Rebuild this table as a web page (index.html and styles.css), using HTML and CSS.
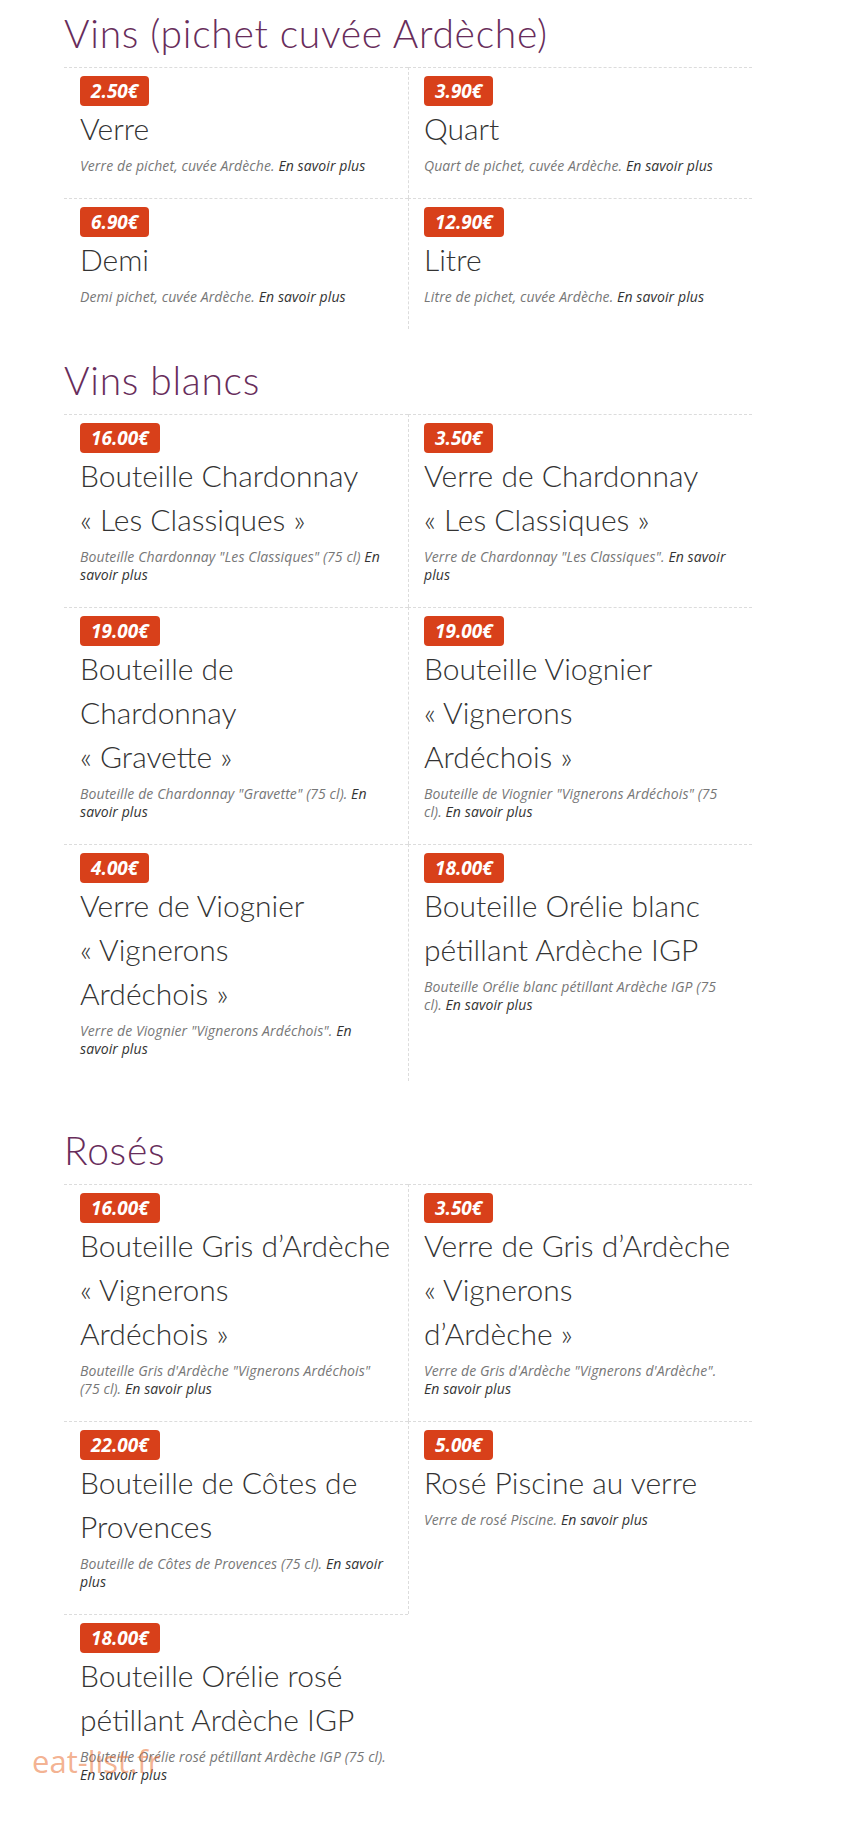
FILE: index.html
```html
<!DOCTYPE html>
<html lang="fr">
<head>
<meta charset="utf-8">
<title>Carte des vins</title>
<link rel="stylesheet" href="styles.css">
</head>
<body>
<main class="menu">
  <section class="category">
    <h2 class="category-title">Vins (pichet cuvée Ardèche)</h2>
    <div class="items">
      <article class="item">
        <span class="price">2.50€</span>
        <h3 class="item-name">Verre</h3>
        <p class="item-desc">Verre de pichet, cuvée Ardèche. <a class="more">En savoir plus</a></p>
      </article>
      <article class="item">
        <span class="price">3.90€</span>
        <h3 class="item-name">Quart</h3>
        <p class="item-desc">Quart de pichet, cuvée Ardèche. <a class="more">En savoir plus</a></p>
      </article>
      <article class="item">
        <span class="price">6.90€</span>
        <h3 class="item-name">Demi</h3>
        <p class="item-desc">Demi pichet, cuvée Ardèche. <a class="more">En savoir plus</a></p>
      </article>
      <article class="item">
        <span class="price">12.90€</span>
        <h3 class="item-name">Litre</h3>
        <p class="item-desc">Litre de pichet, cuvée Ardèche. <a class="more">En savoir plus</a></p>
      </article>
    </div>
  </section>

  <section class="category">
    <h2 class="category-title">Vins blancs</h2>
    <div class="items">
      <article class="item">
        <span class="price">16.00€</span>
        <h3 class="item-name">Bouteille Chardonnay<br>«&nbsp;Les Classiques&nbsp;»</h3>
        <p class="item-desc">Bouteille Chardonnay "Les Classiques" (75 cl) <a class="more">En savoir plus</a></p>
      </article>
      <article class="item">
        <span class="price">3.50€</span>
        <h3 class="item-name">Verre de Chardonnay<br>«&nbsp;Les Classiques&nbsp;»</h3>
        <p class="item-desc">Verre de Chardonnay "Les Classiques". <a class="more">En savoir plus</a></p>
      </article>
      <article class="item">
        <span class="price">19.00€</span>
        <h3 class="item-name">Bouteille de<br>Chardonnay<br>«&nbsp;Gravette&nbsp;»</h3>
        <p class="item-desc">Bouteille de Chardonnay "Gravette" (75 cl). <a class="more">En savoir plus</a></p>
      </article>
      <article class="item">
        <span class="price">19.00€</span>
        <h3 class="item-name">Bouteille Viognier<br>«&nbsp;Vignerons<br>Ardéchois&nbsp;»</h3>
        <p class="item-desc">Bouteille de Viognier "Vignerons Ardéchois" (75 cl). <a class="more">En savoir plus</a></p>
      </article>
      <article class="item">
        <span class="price">4.00€</span>
        <h3 class="item-name">Verre de Viognier<br>«&nbsp;Vignerons<br>Ardéchois&nbsp;»</h3>
        <p class="item-desc">Verre de Viognier "Vignerons Ardéchois". <a class="more">En savoir plus</a></p>
      </article>
      <article class="item">
        <span class="price">18.00€</span>
        <h3 class="item-name">Bouteille Orélie blanc<br>pétillant Ardèche IGP</h3>
        <p class="item-desc">Bouteille Orélie blanc pétillant Ardèche IGP (75 cl). <a class="more">En savoir plus</a></p>
      </article>
    </div>
  </section>

  <section class="category category--spaced">
    <h2 class="category-title">Rosés</h2>
    <div class="items">
      <article class="item">
        <span class="price">16.00€</span>
        <h3 class="item-name">Bouteille Gris d’Ardèche<br>«&nbsp;Vignerons<br>Ardéchois&nbsp;»</h3>
        <p class="item-desc">Bouteille Gris d'Ardèche "Vignerons Ardéchois" (75 cl). <a class="more">En savoir plus</a></p>
      </article>
      <article class="item">
        <span class="price">3.50€</span>
        <h3 class="item-name">Verre de Gris d’Ardèche<br>«&nbsp;Vignerons<br>d’Ardèche&nbsp;»</h3>
        <p class="item-desc">Verre de Gris d'Ardèche "Vignerons d'Ardèche". <a class="more">En savoir plus</a></p>
      </article>
      <article class="item">
        <span class="price">22.00€</span>
        <h3 class="item-name">Bouteille de Côtes de<br>Provences</h3>
        <p class="item-desc">Bouteille de Côtes de Provences (75 cl). <a class="more">En savoir plus</a></p>
      </article>
      <article class="item">
        <span class="price">5.00€</span>
        <h3 class="item-name">Rosé Piscine au verre</h3>
        <p class="item-desc">Verre de rosé Piscine. <a class="more">En savoir plus</a></p>
      </article>
      <article class="item">
        <span class="price">18.00€</span>
        <h3 class="item-name">Bouteille Orélie rosé<br>pétillant Ardèche IGP</h3>
        <p class="item-desc">Bouteille Orélie rosé pétillant Ardèche IGP (75 cl). <a class="more">En savoir plus</a></p>
      </article>
    </div>
  </section>

  <div class="watermark">eat-list.fr</div>
</main>
</body>
</html>
```

FILE: styles.css
```css
html, body {
  margin: 0;
  padding: 0;
  background: #ffffff;
}

.menu {
  position: relative;
  width: 688px;
  padding: 11px 0 0 64px;
}

.category + .category {
  margin-top: 29px;
}

.category--spaced {
  margin-top: 47px !important;
}

.category-title {
  margin: 0 0 12px;
  font-family: "Lato", "Open Sans", sans-serif;
  font-weight: 300;
  font-size: 39px;
  letter-spacing: 0.7px;
  line-height: 44px;
  color: #682d5b;
}

.items {
  display: grid;
  grid-template-columns: repeat(2, minmax(0, 1fr));
}

.item {
  border-top: 1px dashed #dcdcdc;
  padding: 8px 20px 23px 16px;
}

.item:nth-child(even) {
  border-left: 1px dashed #dcdcdc;
  padding-left: 15px;
}

.price {
  display: block;
  width: fit-content;
  padding: 0 11px;
  height: 30px;
  border-radius: 4px;
  background: #d8401a;
  color: #ffffff;
  font-family: "Open Sans", sans-serif;
  font-style: italic;
  font-weight: 700;
  font-size: 19px;
  line-height: 30px;
}

.item-name {
  margin: 0;
  font-family: "Lato", "Open Sans", sans-serif;
  font-weight: 300;
  font-size: 30px;
  line-height: 44px;
  white-space: nowrap;
  color: #333333;
}

.item-desc {
  margin: 7px 0 0;
  font-family: "Open Sans", sans-serif;
  font-style: italic;
  font-size: 14px;
  letter-spacing: 0.1px;
  line-height: 18px;
  color: #777777;
}

.more {
  color: #333333;
}

.watermark {
  position: absolute;
  left: 32px;
  top: 1740px;
  font-family: "Open Sans", sans-serif;
  font-size: 31px;
  line-height: 42px;
  color: rgba(234, 112, 52, 0.55);
}
```
